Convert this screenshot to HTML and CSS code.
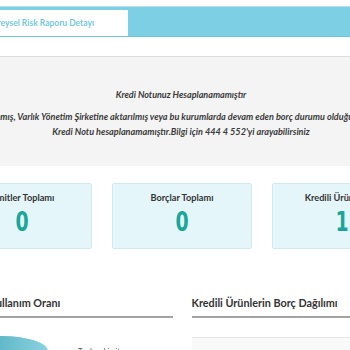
FILE: index.html
```html
<!DOCTYPE html>
<html>
<head>
    <title>Bireysel Risk Raporu Detayı</title>
    <link rel="stylesheet" href="styles.css">
</head>
<body>
    <div id="tabbar">
        <div class="tab">Bireysel Risk Raporu Detayı</div>
    </div>
    <div id="subbar"></div>
    <div id="notice">
        <div class="wide">
            <p class="title">Kredi Notunuz Hesaplanamamıştır</p>
            <p class="msg first">Takibe alınmış, Varlık Yönetim Şirketine aktarılmış veya bu kurumlarda devam eden borç durumu olduğu için</p>
            <p class="msg">Kredi Notu hesaplanamamıştır.Bilgi için 444 4 552'yi arayabilirsiniz</p>
        </div>
    </div>
    <div class="wide">
        <div id="cards">
            <div class="card">
                <div class="card-title">Limitler Toplamı</div>
                <div class="card-value">0</div>
            </div>
            <div class="card">
                <div class="card-title">Borçlar Toplamı</div>
                <div class="card-value">0</div>
            </div>
            <div class="card">
                <div class="card-title">Kredili Ürün Sayısı</div>
                <div class="card-value">1</div>
            </div>
        </div>
        <div id="sections">
            <div class="section">
                <h3 class="right">Limit Kullanım Oranı</h3>
                <div class="chart">
                    <div class="pie"></div>
                    <div class="legend">Toplam Limit</div>
                </div>
            </div>
            <div class="section">
                <h3>Kredili Ürünlerin Borç Dağılımı</h3>
                <div class="table-box"></div>
            </div>
        </div>
    </div>
</body>
</html>
```

FILE: styles.css
```css
body {
    margin: 0;
    padding: 0;
    background-color: #fff;
    font-family: Lato, "Open Sans", Arial, sans-serif;
    color: #333;
    overflow: hidden;
}
#tabbar {
    margin-top: 6px;
    height: 29px;
    background-color: #7dcfe4;
    border-top: 1px solid #b4e3ee;
    border-bottom: 1px solid #74c3d7;
    display: flex;
    align-items: flex-end;
}
.tab {
    margin-left: -44px;
    width: 172px;
    height: 26px;
    background-color: #fff;
    color: #74c9de;
    font-size: 8.5px;
    font-weight: 700;
    line-height: 26px;
    text-align: center;
    white-space: nowrap;
}
#subbar {
    height: 19px;
    background-color: #fff;
    border-bottom: 1px solid #dcdcdc;
}
#notice {
    background-color: #f4f4f4;
    height: 108px;
    padding-top: 1px;
}
.wide {
    width: 460px;
    margin-left: -48px;
}
#notice .wide {
    width: 600px;
    margin-left: -119px;
    text-align: center;
}
.title {
    margin: 31px 0 9px 0;
    font-size: 9px;
    font-style: italic;
    font-weight: 700;
    color: #3a3a3a;
}
.msg {
    margin: 0;
    font-size: 9.1px;
    font-style: italic;
    font-weight: 700;
    line-height: 15px;
    color: #3a3a3a;
    white-space: nowrap;
}
.msg.first {
    padding-right: 34px;
}
#cards {
    display: flex;
    gap: 20px;
    margin-top: 17px;
}
.card {
    flex: 1;
    height: 64px;
    background-color: #e5f6fa;
    border: 1px solid #d3e9ee;
    border-radius: 2px;
    text-align: center;
}
.card-title {
    margin-top: 8px;
    font-size: 9.2px;
    font-weight: 700;
    color: #333;
    white-space: nowrap;
}
.card-value {
    margin-top: 4px;
    font-family: "DejaVu Sans", sans-serif;
    font-size: 27px;
    font-weight: 700;
    line-height: 30px;
    color: #1ba69a;
    transform: scaleX(0.7);
}
#sections {
    display: flex;
    gap: 19px;
    margin-top: 47px;
}
.section {
    flex: 1;
}
.section h3 {
    margin: 0;
    padding-bottom: 7px;
    font-size: 10.8px;
    font-weight: 700;
    color: #333;
    border-bottom: 2px solid #a3a3a3;
}
.section h3.right {
    padding-left: 10px;
}
.chart {
    display: flex;
    margin-top: 18px;
}
.pie {
    width: 90px;
    height: 30px;
    border-radius: 50%;
    background: linear-gradient(90deg, #3fa3b6, #8ad2e0);
    margin-left: 6px;
}
.legend {
    margin-left: 30px;
    margin-top: 11px;
    font-size: 7.5px;
    color: #555;
}
.table-box {
    margin-top: 19px;
    height: 40px;
    background-color: #f9f9f9;
    border-top: 1px solid #e4e4e4;
}
```
